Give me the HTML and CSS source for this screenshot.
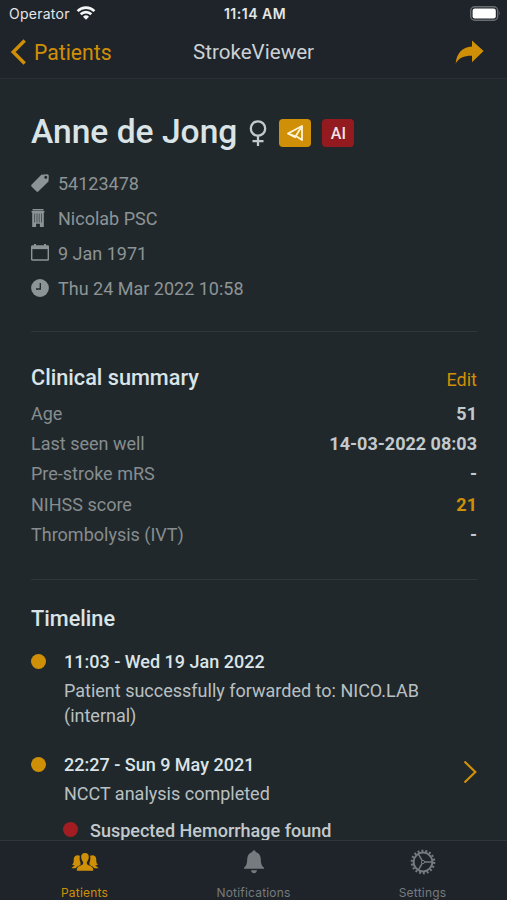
FILE: index.html
```html
<!DOCTYPE html>
<html lang="en">
  <head>
    <meta charset="UTF-8" />
    <meta name="viewport" content="width=device-width, initial-scale=1.0" />
    <title>StrokeViewer</title>
    <link rel="stylesheet" href="styles.css">
  </head>
  <body>
    <header class="header">
      <div class="status">
        <div class="carrier">
          <span>Operator</span>
          <svg width="20" height="16" viewBox="0 0 20 16" fill="none" stroke="#f4f5f6" stroke-width="2.7">
            <path d="M1.6 5.1a12 12 0 0 1 16.8 0" />
            <path d="M4.7 8.2a7.6 7.6 0 0 1 10.6 0" />
            <path d="M10 13.8l-3-3.1a4.3 4.3 0 0 1 6 0z" fill="#f4f5f6" stroke="none" />
          </svg>
        </div>
        <span class="time">11:14 AM</span>
        <svg class="battery" width="31" height="16" viewBox="0 0 31 16">
          <rect x="0.7" y="0.7" width="27" height="13.6" rx="4" fill="none" stroke="#696d71" stroke-width="1.4" />
          <rect x="2.6" y="2.6" width="23.2" height="9.8" rx="2.2" fill="#fff" />
          <path d="M29 5.3q1.7 2.2 0 4.4z" fill="#696d71" />
        </svg>
      </div>
      <nav class="nav">
        <a class="back">
          <svg width="16" height="26" viewBox="0 0 16 26" fill="none" stroke="#cf8f07" stroke-width="3.4">
            <path d="M14.7 1.5L3.2 13l11.5 11.5" />
          </svg>
          <span>Patients</span>
        </a>
        <span class="nav-title">StrokeViewer</span>
        <svg class="share" width="29" height="24" viewBox="0 0 29 24" fill="#cf8f07">
          <path d="M17 0.5L28.6 11 17 22.2v-6.4C9 15.7 4 17.8 0.7 23.5 1.5 13.8 7 7.3 17 6.6z" />
        </svg>
      </nav>
    </header>

    <main class="content">
      <section class="patient">
        <div class="name-row">
          <h1>Anne de Jong</h1>
          <svg class="female" width="18" height="27" viewBox="0 0 18 27" fill="none" stroke="#c3cacd" stroke-width="2.3">
            <circle cx="9" cy="8.5" r="7.2" />
            <path d="M9 15.7V26M3.5 21.2h11" />
          </svg>
          <span class="badge gold">
            <svg width="18" height="18" viewBox="0 0 18 18" fill="none" stroke="#fff3d6" stroke-width="1.8" stroke-linejoin="round">
              <path d="M2 9.5L16 2v14L11.5 13z" />
              <path d="M2 9.5L9 13.2 16 2" />
            </svg>
          </span>
          <span class="badge red">AI</span>
        </div>
        <ul class="meta">
          <li>
            <svg width="18" height="18" viewBox="0 0 18 18" fill="#8d9496">
              <path fill-rule="evenodd" d="M10.3 0.8L16.2 0.3q1.6 0 1.6 1.6l-0.3 5.5L7.5 17.2q-1.1 1-2.2 0L0.7 12.7q-1.1-1.2 0-2.3zM13.3 3.2a1.5 1.5 0 1 0 3 0a1.5 1.5 0 1 0-3 0z" />
            </svg>
            54123478
          </li>
          <li>
            <svg width="18" height="18" viewBox="0 0 18 18" fill="#8d9496">
              <path d="M1.5 0h11v1.4h-11zM0.5 2h13v1.5h-0.7V18H8.9v-3.3H5.1V18H1.2V3.5H0.5z" />
              <path d="M3.6 4.5v9M6 4.5v9M8.2 4.5v9M10.5 4.5v9" stroke="#21282b" stroke-width="0.6" />
            </svg>
            Nicolab PSC
          </li>
          <li>
            <svg width="18" height="17" viewBox="0 0 18 17" fill="none" stroke="#8d9496">
              <rect x="0.7" y="2" width="16.6" height="14" rx="0.6" stroke-width="1.4" />
              <path d="M0.7 3.6h16.6" stroke-width="3" />
              <path d="M4 0v2M14 0v2" stroke-width="2" />
            </svg>
            9 Jan 1971
          </li>
          <li>
            <svg width="18" height="18" viewBox="0 0 18 18">
              <circle cx="9" cy="9" r="8.9" fill="#8d9496" />
              <path d="M9.3 4v6H5" fill="none" stroke="#21282b" stroke-width="1.3" />
            </svg>
            Thu 24 Mar 2022 10:58
          </li>
        </ul>
      </section>

      <section class="summary">
        <div class="section-head">
          <h2>Clinical summary</h2>
          <a class="edit">Edit</a>
        </div>
        <dl>
          <div><dt>Age</dt><dd>51</dd></div>
          <div><dt>Last seen well</dt><dd>14-03-2022 08:03</dd></div>
          <div><dt>Pre-stroke mRS</dt><dd>-</dd></div>
          <div><dt>NIHSS score</dt><dd class="highlight">21</dd></div>
          <div><dt>Thrombolysis (IVT)</dt><dd>-</dd></div>
        </dl>
      </section>

      <section class="timeline">
        <h2>Timeline</h2>
        <div class="event">
          <span class="dot"></span>
          <div class="event-body">
            <h3>11:03 - Wed 19 Jan 2022</h3>
            <p>Patient successfully forwarded to: NICO.LAB (internal)</p>
          </div>
        </div>
        <div class="event">
          <span class="dot"></span>
          <div class="event-body">
            <h3>22:27 - Sun 9 May 2021</h3>
            <p>NCCT analysis completed</p>
            <div class="finding"><span class="dot"></span>Suspected Hemorrhage found</div>
          </div>
          <svg class="chevron" width="14" height="24" viewBox="0 0 14 24" fill="none" stroke="#cf8f07" stroke-width="2.2">
            <path d="M1.5 1.5L12.3 12 1.5 22.5" />
          </svg>
        </div>
      </section>
    </main>

    <footer class="tabs">
      <a class="tab active">
        <svg width="28" height="26" viewBox="0 0 28 26" fill="#cf8f07">
          <path d="M14 4c-2.7 0-4 1.8-3.8 4.2.2 2.3.9 3.7 1.9 4.7v2c-1.2 1.7-5.2 1.7-6 4.4q-.4 1.3-.3 2.4h16.4q.1-1.1-.3-2.4c-.8-2.7-4.8-2.7-6-4.4v-2c1-1 1.7-2.4 1.9-4.7C18 5.8 16.7 4 14 4z" />
          <path id="side" d="M8.9 6.8C6 5.5 3.1 6.5 2.8 9.8c-.2 2.7.2 4.5-1.7 5.8 1 .6 1.8.8 2.7.9-.3 1-2.6 1-3.3 2.7h4.3c1.1-2 3.3-2.4 4.7-3.5V13.6C8.7 12 8.3 9.3 8.9 6.8z" />
          <use href="#side" transform="matrix(-1 0 0 1 28 0)" />
        </svg>
        <span>Patients</span>
      </a>
      <a class="tab">
        <svg width="22" height="26" viewBox="0 0 22 26" fill="#757b7f">
          <path d="M11 1.3c1 0 1.6.8 1.7 1.8 3.3.9 4.9 3.6 5.1 7.2.2 5 1 6.5 3.2 8.5v1H1v-1c2.2-2 3-3.5 3.2-8.5.2-3.6 1.8-6.3 5.1-7.2.1-1 .7-1.8 1.7-1.8zM8 21.3h6c-.3 1.8-1.5 2.9-3 2.9s-2.7-1.1-3-2.9z" />
        </svg>
        <span>Notifications</span>
      </a>
      <a class="tab">
        <svg width="26" height="26" viewBox="0 0 26 26" fill="none" stroke="#757b7f">
          <circle cx="13" cy="13" r="11.2" stroke-width="2.2" stroke-dasharray="1.95 1.96" />
          <circle cx="13" cy="13" r="9.4" stroke-width="2" />
          <circle cx="13" cy="13" r="1.6" stroke-width="1" />
          <path d="M14.5 13H22M12.2 11.7L8.3 4.9M12.2 14.3l-3.9 6.8" stroke-width="1.5" />
        </svg>
        <span>Settings</span>
      </a>
    </footer>
  </body>
</html>
```
FILE: styles.css
```css
* {
  box-sizing: border-box;
  margin: 0;
  padding: 0;
}
body {
  height: 100vh;
  display: flex;
  flex-direction: column;
  overflow: hidden;
  background-color: #21282b;
  color: #b9c0c3;
  font-family: Roboto, sans-serif;
  font-size: 18px;
}
svg {
  display: block;
  flex-shrink: 0;
}
.header {
  height: 79px;
  flex-shrink: 0;
  background-color: #1f242a;
  border-bottom: 1px solid #292f34;
}
.status {
  height: 27px;
  padding: 0 6px 0 9px;
  display: grid;
  grid-template-columns: 1fr auto 1fr;
  align-items: center;
  font-family: Inter, sans-serif;
  font-size: 14px;
  color: #e4e6e8;
}
.carrier {
  display: flex;
  align-items: center;
  gap: 6px;
  letter-spacing: 0.25px;
}
.time {
  font-weight: 600;
  letter-spacing: 0.5px;
}
.battery {
  justify-self: end;
}
.nav {
  height: 50px;
  padding: 0 23px 0 10px;
  display: grid;
  grid-template-columns: 1fr auto 1fr;
  align-items: center;
}
.back {
  display: flex;
  align-items: center;
  gap: 8px;
  color: #cf8f07;
  font-size: 21.2px;
}
.nav-title {
  font-size: 20.6px;
  color: #cbd1d5;
  padding-left: 13px;
}
.share {
  justify-self: end;
}
.content {
  flex: 1;
  min-height: 0;
  overflow: hidden;
  padding: 29px 30px 0 31px;
}
.name-row {
  height: 50px;
  display: flex;
  align-items: center;
}
h1 {
  font-size: 33.6px;
  font-weight: 500;
  line-height: 40px;
  margin-top: -2px;
  color: #dae4e7;
}
.female {
  margin-left: 12px;
}
.badge {
  width: 32px;
  height: 28px;
  margin-left: 12px;
  border-radius: 4px;
  display: flex;
  align-items: center;
  justify-content: center;
}
.gold {
  background-color: #cf8f07;
}
.red {
  margin-left: 11px;
  background-color: #931b1f;
  color: #f0e3e4;
  font-size: 16px;
  font-weight: 500;
}
.meta {
  list-style: none;
  margin-top: 8px;
  color: #8d9496;
}
.meta li {
  height: 35px;
  display: flex;
  align-items: center;
  gap: 9px;
}
.meta svg {
  margin-top: -2px;
}
.summary,
.timeline {
  border-top: 1px solid #30383b;
}
.summary {
  margin-top: 25px;
  padding-top: 27px;
}
.section-head {
  height: 39px;
  padding-bottom: 2px;
  display: flex;
  align-items: center;
  justify-content: space-between;
}
h2 {
  font-size: 21.7px;
  font-weight: 500;
  line-height: 30px;
  color: #dae4e7;
}
.edit {
  padding-top: 4px;
  color: #cf8f07;
}
dl div {
  height: 30.3px;
  display: flex;
  align-items: center;
  justify-content: space-between;
}
dt {
  color: #868d90;
}
dd {
  font-weight: 700;
  color: #c3cacd;
}
.highlight {
  color: #cf8f07;
}
.timeline {
  margin-top: 29.5px;
  padding-top: 24px;
}
.event {
  display: flex;
  margin-top: 15px;
}
.event + .event {
  margin-top: 24px;
}
.dot {
  width: 15px;
  height: 15px;
  margin-top: 5px;
  border-radius: 50%;
  flex-shrink: 0;
  background-color: #cf8f07;
}
.event-body {
  flex: 1;
  margin-left: 18px;
}
h3 {
  font-size: 18px;
  font-weight: 500;
  line-height: 26px;
  color: #dae4e7;
}
.event p {
  margin-top: 3px;
  line-height: 25px;
}
.finding {
  display: flex;
  margin-top: 12px;
  line-height: 26px;
  font-weight: 500;
  color: #c3cacd;
}
.finding .dot {
  margin: 4px 12px 0 -1px;
  background-color: #a11d21;
}
.chevron {
  margin-top: 8px;
}
.tabs {
  height: 60px;
  flex-shrink: 0;
  display: flex;
  background-color: #1f242a;
  border-top: 1px solid #30363a;
}
.tab {
  flex: 1;
  display: flex;
  flex-direction: column;
  align-items: center;
  gap: 9px;
  padding-top: 8px;
  font-family: Inter, sans-serif;
  font-size: 12px;
  letter-spacing: 0.2px;
  line-height: 18px;
  color: #757b7f;
}
.active {
  color: #cf8f07;
}
```
